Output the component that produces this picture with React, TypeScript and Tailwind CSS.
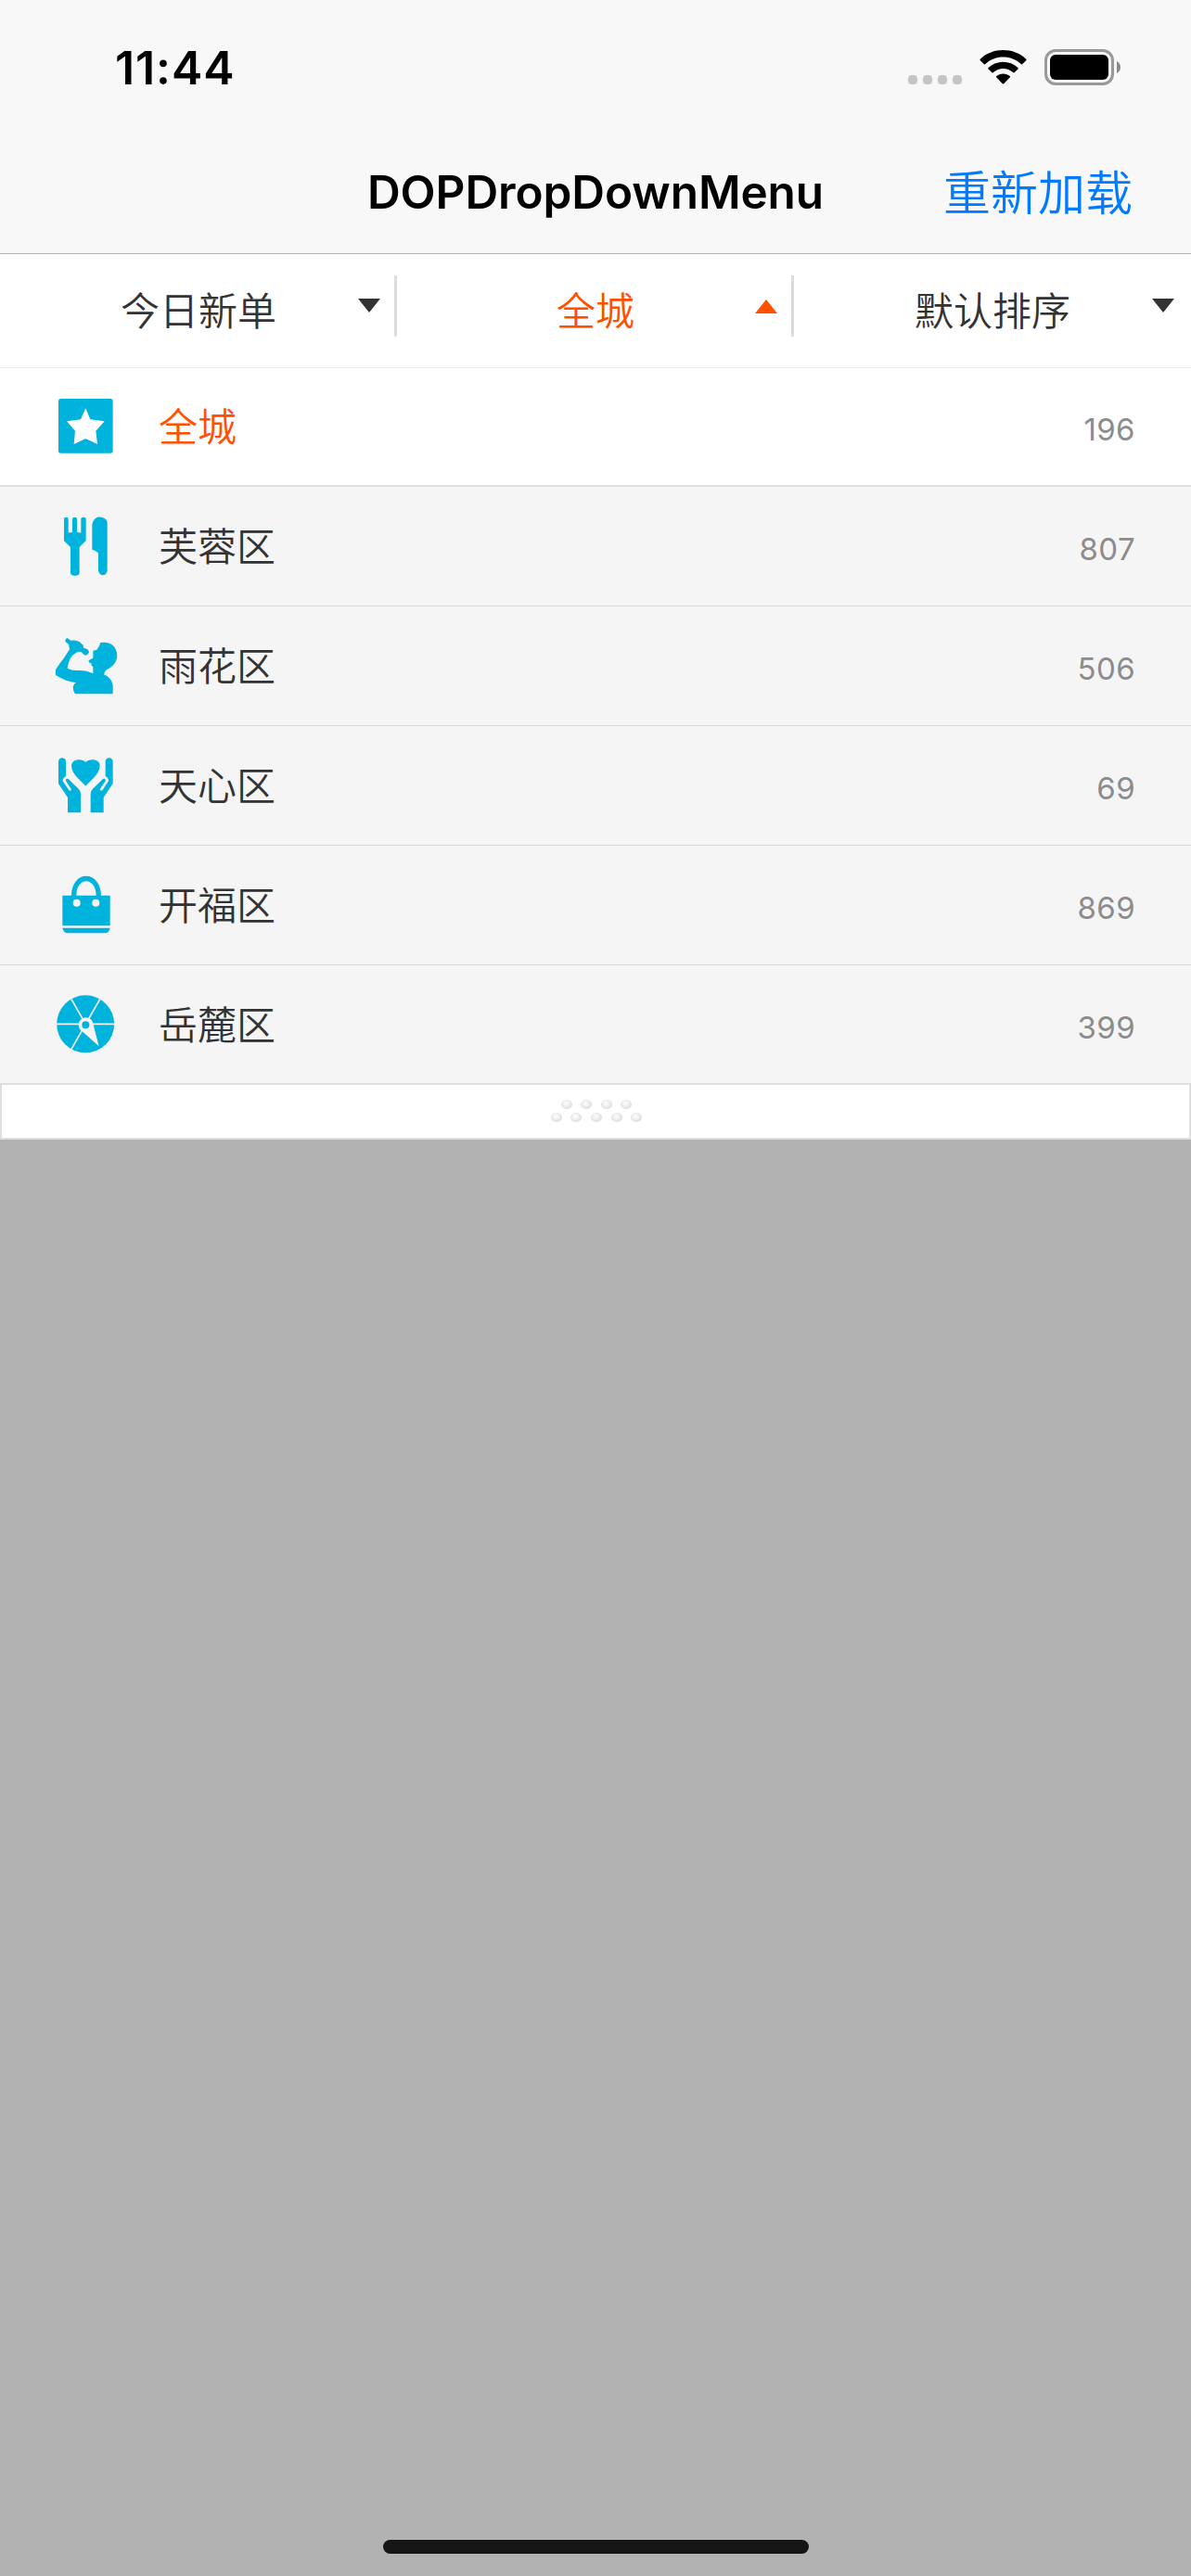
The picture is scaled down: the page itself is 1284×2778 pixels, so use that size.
import React from "react";

const latin = "font-['Inter','Noto_Sans_CJK_SC',sans-serif]";
const cjk = "font-['Noto_Sans_CJK_SC',sans-serif]";

function StarIcon() {
  return (
    <svg viewBox="51 75 210 210" className="h-[70px] w-[70px]">
      <rect x="69" y="90" width="176" height="176" rx="8" fill="#00b3dc" />
      <path d="M157 121L172 157L218 163L190 194L195 237L157 219L119 237L123 194L96 163L141 157Z" fill="#fff" />
    </svg>
  );
}

function CutleryIcon() {
  return (
    <svg viewBox="51 462 210 210" className="h-[70px] w-[70px]" fill="#00b3dc">
      <path d="M87 480Q87 473 94 473Q101 473 101 480V520Q101 527 107 522Q114 525 114 518V480Q114 473 121 473Q129 473 129 480V518Q129 525 136 522Q142 527 142 520V480Q142 473 150 473Q158 473 158 480V549L137 570V652Q137 662 127 662H118Q108 662 108 652V570L87 550Z" />
      <path d="M178 495Q182 480 195 473Q208 470 219 478Q227 484 227 490V646Q225 661 212 661Q200 659 198 646V589Q188 580 178 578Z" />
    </svg>
  );
}

function DrinkIcon() {
  return (
    <svg viewBox="51 98 210 210" className="h-[70px] w-[70px]" fill="#00b3dc">
      <path d="M97 113L109 121Q128 119 136 125L149 136L150 145L161 148Q168 153 168 160Q164 168 156 169Q147 166 143 158L134 157Q116 164 108 178Q100 193 98 211Q112 219 132 218Q158 217 181 228V207L175 201L176 194Q167 194 166 187Q170 182 181 178V154L193 151Q201 143 205 128Q235 124 250 142Q261 159 258 179Q252 203 225 216Q217 221 216 231Q240 241 245 265V294H123Q116 284 116 273Q119 260 127 258Q92 254 60 233V216Q70 199 86 179Q97 163 105 150L102 133L91 125Q91 115 97 113Z" />
    </svg>
  );
}

function CareIcon() {
  return (
    <svg viewBox="51 485 210 210" className="h-[70px] w-[70px]" fill="#00b3dc">
      <path d="M157 592C143 574 112 555 111 526C112 505 143 501 157 515C171 501 203 505 203 526C202 555 171 574 157 592Z" />
      <path d="M69 513Q70 502 81 501Q93 503 93 513V560Q82 567 83 576L103 606Q109 609 111 603L92 574Q93 567 101 569L134 601Q141 607 141 618V678H99V629L69 584Z" />
      <path d="M245 513Q244 502 233 501Q221 503 221 513V560Q232 567 231 576L211 606Q205 609 203 603L222 574Q221 567 213 569L180 601Q173 607 173 618V678H215V629L245 584Z" />
    </svg>
  );
}

function BagIcon() {
  return (
    <svg viewBox="51 92 210 210" className="h-[70px] w-[70px]">
      <path d="M119 170C117 92 200 92 199 170" fill="none" stroke="#00b3dc" strokeWidth="16" />
      <path d="M82 166H236V264H82ZM82 271H236Q233 288 218 288H101Q85 288 82 271Z" fill="#00b3dc" />
      <circle cx="128" cy="190" r="12" fill="#f5f5f5" />
      <circle cx="190" cy="190" r="12" fill="#f5f5f5" />
    </svg>
  );
}

function WheelIcon() {
  return (
    <svg viewBox="51 479 210 210" className="h-[70px] w-[70px]">
      <circle cx="156.500" cy="582" r="93" fill="#00b3dc" />
      <path d="M63 582H250M111 502L157 582L203 502M157 582L111 663" stroke="#f5f5f5" strokeWidth="5" fill="none" />
      <path d="M157 561Q175 562 180 577L200 654L146 606Q134 599 134 584Q137 563 157 561Z" fill="#f5f5f5" />
      <circle cx="157" cy="585" r="12" fill="#00b3dc" />
    </svg>
  );
}

const tabs = [
  { label: "今日新单", open: false },
  { label: "全城", open: true },
  { label: "默认排序", open: false },
];

const rows = [
  { label: "全城", count: 196, Icon: StarIcon },
  { label: "芙蓉区", count: 807, Icon: CutleryIcon },
  { label: "雨花区", count: 506, Icon: DrinkIcon },
  { label: "天心区", count: 69, Icon: CareIcon },
  { label: "开福区", count: 869, Icon: BagIcon },
  { label: "岳麓区", count: 399, Icon: WheelIcon },
];

function rowStyle(i: number) {
  if (i === 0) return "h-[128px] border-b-2 border-[#dbe2e6] bg-white text-[#ff5000]";
  if (i === rows.length - 1) return "h-[127px] pt-px bg-[#f5f5f5] text-[#333]";
  return "h-[129px] border-b border-[#d9d9d9] bg-[#f5f5f5] text-[#333]";
}

function StatusBar() {
  return (
    <div className="flex h-[141px] items-start justify-between pl-[124px] pr-[76px]">
      <span className="mt-[43px] text-[50px] leading-[60px] font-semibold tracking-[0.9px] text-black">11:44</span>
      <div className="mt-[53px] flex items-start">
        <div className="mt-[28px] mr-[19px] flex gap-[6px]">
          {[0, 1, 2, 3].map((i) => (
            <span key={i} className="h-[10px] w-[10px] rounded-[4px] bg-[#c6c6c6]" />
          ))}
        </div>
        <svg width="51" height="38" viewBox="0 0 51 38" className="mr-[19px]">
          <path d="M1 12.500Q0 11.500 1 10.500C14 -2.200 37 -2.200 50 10.500Q51 11.500 50 12.500L46 16.300Q45.500 16.800 45 16.300C34 6 17 6 6 16.300Q5.500 16.800 5 16.300Z" />
          <path d="M9.500 21.500Q8.800 20.700 9.600 20C18.500 11.500 32.500 11.500 41.400 20Q42.200 20.700 41.500 21.500L37.500 25.300Q37 25.800 36.400 25.300C30 19.500 21 19.500 14.600 25.300Q14 25.800 13.500 25.300Z" />
          <path d="M18.300 30.500Q17.500 29.700 18.300 29C22.500 25.500 28.500 25.500 32.700 29Q33.500 29.700 32.700 30.500L26.200 37.200Q25.500 38 24.800 37.200Z" />
        </svg>
        <svg width="82" height="39" viewBox="0 0 82 39">
          <rect x="1.500" y="1.500" width="72" height="36" rx="10.500" fill="none" stroke="#999" strokeWidth="3" />
          <rect x="6" y="6" width="63" height="27" rx="6" />
          <path d="M78 13Q82 15.500 82 19.500Q82 23.500 78 26Z" fill="#8a8a8a" />
        </svg>
      </div>
    </div>
  );
}

export default function App() {
  return (
    <div className={`flex h-[2778px] w-[1284px] flex-col bg-[#b2b2b2] ${latin}`}>
      <header className="h-[274px] border-b border-[#b0b0b0] bg-[#f8f8f8]">
        <StatusBar />
        <div className="grid h-[132px] grid-cols-[1fr_auto_1fr] items-center">
          <span />
          <h1 className="text-[49.500px] font-semibold tracking-[-0.1px] text-black">DOPDropDownMenu</h1>
          <button className={`pr-[63px] pb-[5px] text-right text-[51px] leading-[60px] font-[350] text-[#007aff] ${cjk}`}>重新加载</button>
        </div>
      </header>

      <nav className={`grid h-[123px] grid-cols-3 border-b border-[#ebebeb] bg-white text-[42px] ${cjk}`}>
        {tabs.map((tab, i) => (
          <div
            key={tab.label}
            className={`relative flex items-center justify-center pb-[6px] font-[350] ${tab.open ? "text-[#ff5000]" : "text-[#333]"}`}
          >
            {tab.label}
            <svg
              width="24"
              height="15"
              viewBox="0 0 24 15"
              fill="currentColor"
              className={`absolute right-[18px] ${tab.open ? "top-[49px] rotate-180" : "top-[48px]"}`}
            >
              <path d="M0 0H24L12 15Z" />
            </svg>
            {i < 2 && <span className="absolute top-[23px] right-0 h-[66px] w-[3px] bg-[#dcdcdc]" />}
          </div>
        ))}
      </nav>

      <ul>
        {rows.map(({ label, count, Icon }, i) => (
          <li key={label} className={`flex items-center pr-[60px] pl-[57px] ${rowStyle(i)}`}>
            <Icon />
            <span className={`mb-[4px] ml-[44px] text-[42px] leading-[60px] font-[350] ${cjk}`}>{label}</span>
            <span className="mt-[6px] ml-auto text-[33px] leading-[40px] font-normal tracking-[0.4px] text-[#8c8c8c]">{count}</span>
          </li>
        ))}
      </ul>

      <div className="flex h-[61px] flex-col items-center gap-[4px] border-2 border-[#dedede] bg-white pt-[16px] pl-[2px]">
        {[4, 5].map((n) => (
          <div key={n} className="flex gap-[9.600px]">
            {Array.from({ length: n }, (_, i) => (
              <span
                key={i}
                className="h-[10px] w-[12px] rounded-[50%] bg-[radial-gradient(ellipse_at_45%_40%,#f8f8f8_20%,#dadada_75%)]"
              />
            ))}
          </div>
        ))}
      </div>

      <div className="mx-auto mt-auto mb-[24px] h-[15px] w-[459px] rounded-full bg-[#161616]" />
    </div>
  );
}
